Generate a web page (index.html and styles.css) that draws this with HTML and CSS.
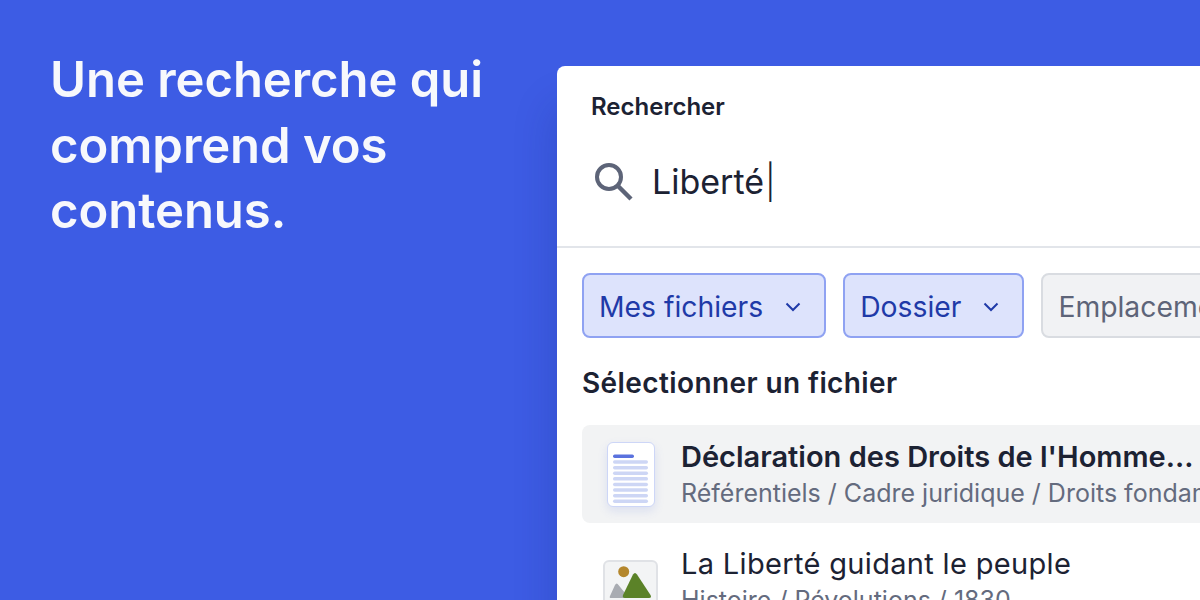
FILE: index.html
```html
<!DOCTYPE html>
<html lang="fr">
  <head>
    <meta charset="UTF-8" />
    <title>Recherche</title>
    <link rel="stylesheet" href="styles.css">
  </head>
  <body>
    <div class="page">
      <h1 class="headline">Une recherche qui comprend vos contenus.</h1>
      <div class="panel">
        <div class="search">
          <div class="search-label">Rechercher</div>
          <div class="search-field">
            <svg class="search-icon" viewBox="0 0 40 40" width="40" height="40">
              <circle cx="15" cy="15" r="12" fill="none" stroke="#5d6478" stroke-width="4"/>
              <path d="M24 24 L37 37" stroke="#5d6478" stroke-width="4.400" fill="none"/>
            </svg>
            <span class="search-value">Liberté<span class="caret">|</span></span>
          </div>
        </div>
        <div class="results">
          <div class="filters">
            <div class="filter active">Mes fichiers
              <svg class="chevron" viewBox="0 0 16 10" width="16" height="10"><path d="M1.500 1.500 L8 8 L14.500 1.500" fill="none" stroke="#1f3aa8" stroke-width="2"/></svg>
            </div>
            <div class="filter active">Dossier
              <svg class="chevron" viewBox="0 0 16 10" width="16" height="10"><path d="M1.500 1.500 L8 8 L14.500 1.500" fill="none" stroke="#1f3aa8" stroke-width="2"/></svg>
            </div>
            <div class="filter">Emplacement</div>
          </div>
          <h2 class="results-title">Sélectionner un fichier</h2>
          <div class="file selected">
            <div class="thumb thumb-doc">
              <svg viewBox="0 0 46 63" width="46" height="63">
                <rect x="5" y="11.500" width="21" height="3.500" rx="1.700" fill="#5a72de"/>
                <g fill="#cdd6f5">
                  <rect x="5" y="17.300" width="35" height="3.500" rx="1.700"/>
                  <rect x="5" y="22.900" width="35" height="3.500" rx="1.700"/>
                  <rect x="5" y="28.500" width="35" height="3.500" rx="1.700"/>
                  <rect x="5" y="34.100" width="35" height="3.500" rx="1.700"/>
                  <rect x="5" y="39.700" width="35" height="3.500" rx="1.700"/>
                  <rect x="5" y="45.300" width="35" height="3.500" rx="1.700"/>
                  <rect x="5" y="50.900" width="35" height="3.500" rx="1.700"/>
                  <rect x="5" y="56.500" width="35" height="3.500" rx="1.700"/>
                </g>
              </svg>
            </div>
            <div class="file-text">
              <div class="file-name strong">Déclaration des Droits de l'Homme...</div>
              <div class="file-path">Référentiels / Cadre juridique / Droits fondamentaux</div>
            </div>
          </div>
          <div class="file">
            <div class="thumb thumb-img">
              <svg viewBox="0 0 51 64" width="51" height="64">
                <circle cx="18.700" cy="9.700" r="5.500" fill="#b4862c"/>
                <path d="M5 34 L10 23 Q11.700 20 13.500 23 L24 36 L6 36 Q4 36 5 34 Z" fill="#a9acb2"/>
                <path d="M18 33 L28 12.500 Q30 9.500 32 12.500 L45.500 33 Q47 36 44 36 L20 36 Q17 36 18 33 Z" fill="#5b8228"/>
              </svg>
            </div>
            <div class="file-text">
              <div class="file-name regular">La Liberté guidant le peuple</div>
              <div class="file-path">Histoire / Révolutions / 1830</div>
            </div>
          </div>
        </div>
      </div>
    </div>
  </body>
</html>
```

FILE: styles.css
```css
* {
  margin: 0;
  padding: 0;
  box-sizing: border-box;
}
html,
body {
  height: 100%;
  overflow: hidden;
}
body {
  background-color: #3d5ce4;
  font-family: "Inter", "Noto Sans", sans-serif;
  color: #1c2233;
}
.page {
  display: flex;
  align-items: flex-start;
  height: 600px;
  padding: 47px 0 0 50px;
}
.headline {
  flex: none;
  width: 507px;
  padding-right: 15px;
  font-size: 49px;
  line-height: 65.500px;
  font-weight: 600;
  letter-spacing: -0.05px;
  color: #f7f8fc;
}
.panel {
  flex: none;
  width: 800px;
  height: 600px;
  margin-top: 19px;
  background-color: #fff;
  border-radius: 8px 0 0 0;
  box-shadow: -4px 40px 40px rgba(20, 35, 120, 0.2);
}
.search {
  height: 182px;
  padding: 27px 0 0 34px;
  border-bottom: 2px solid #e2e5ea;
}
.search-label {
  font-size: 24px;
  line-height: 28px;
  font-weight: 600;
}
.search-field {
  display: flex;
  align-items: center;
  gap: 18px;
  margin-top: 37px;
  margin-left: 3px;
}
.search-value {
  font-size: 34px;
  line-height: 48px;
}
.caret {
  font-weight: 300;
  margin-left: 1px;
}
.results {
  padding: 25px 0 0 25px;
}
.filters {
  display: flex;
  gap: 17px;
}
.filter {
  display: flex;
  align-items: center;
  gap: 22px;
  height: 65px;
  padding: 2px 23px 0 15px;
  font-size: 28.300px;
  color: #5d6478;
  background-color: #f1f2f4;
  border: 2px solid #d9dce1;
  border-radius: 8px;
  white-space: nowrap;
}
.filter.active {
  color: #1f3aa8;
  background-color: #dde3fc;
  border-color: #8fa2f2;
}
.results-title {
  margin-top: 27px;
  font-size: 28px;
  line-height: 36px;
  font-weight: 600;
  letter-spacing: 0.4px;
}
.file {
  display: flex;
  align-items: center;
  gap: 26px;
  height: 98px;
  padding-left: 25px;
  border-radius: 8px 0 0 8px;
}
.file.selected {
  margin-top: 24px;
  background-color: #f2f3f4;
}
.file + .file {
  margin-top: 9px;
  padding-left: 21px;
  gap: 23px;
}
.file + .file .file-text {
  margin-top: -1px;
}
.thumb {
  flex: none;
  border-radius: 6px;
}
.thumb svg {
  display: block;
}
.thumb-doc {
  background-color: #fff;
  border: 1px solid #cdd6f7;
  box-shadow: 0 4px 10px rgba(90, 114, 222, 0.15);
}
.thumb-img {
  background-color: #f3f4f5;
  border: 2px solid #e0e2e6;
  align-self: flex-start;
  margin-top: 28px;
}
.file-text {
  white-space: nowrap;
}
.file-name {
  font-size: 29px;
  line-height: 37px;
}
.file-name.strong {
  font-weight: 600;
}
.file-name.regular {
  letter-spacing: 0.33px;
}
.file-path {
  margin-top: 1px;
  font-size: 25px;
  line-height: 34px;
  color: #646b7e;
}
```
